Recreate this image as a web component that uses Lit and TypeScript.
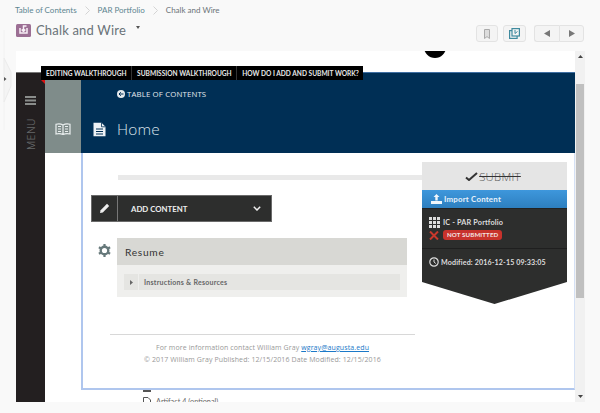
import { LitElement, html, css } from "lit";
import { customElement } from "lit/decorators.js";

@customElement("app-root")
export class AppRoot extends LitElement {
  static styles = css`
    :host { display: block; width: 600px; height: 413px; background: #f9f9f9; overflow: hidden; position: relative; font-family: Lato, "Open Sans", sans-serif; color: #444; }
    * { box-sizing: border-box; }
    .crumbs { display: flex; align-items: center; height: 20px; padding: 0 0 0 15px; font-size: 8px; color: #5d8590; gap: 8px; }
    .crumbs svg { display: block; }
    .crumbs .cur { color: #6b7378; }
    .head { display: flex; align-items: center; height: 31px; padding: 0 16px 11px 16px; }
    .title { font-size: 13px; color: #6a7378; margin-left: 5px; letter-spacing: 0.18px; }
    .caret { width: 0; height: 0; border: 2.5px solid transparent; border-top: 3px solid #555; margin: 0 0 0 10px; position: relative; top: -2px; }
    .tools { margin-left: auto; margin-top: 7px; display: flex; gap: 5px; }
    .btn { height: 17px; background: #f4f4f4; border: 1px solid #e3e3e3; border-radius: 3px; display: flex; align-items: center; justify-content: center; }
    .btn.b1 { width: 22px; } .btn.b2 { width: 23px; margin-right: 3px; }
    .group { display: flex; }
    .group .btn { width: 25px; }
    .group .btn:first-child { border-radius: 3px 0 0 3px; border-right: 0; }
    .group .btn:last-child { border-radius: 0 3px 3px 0; }
    .frame-row { display: flex; margin-left: 16px; width: 569px; height: 351px; }
    .frame { width: 559px; height: 351px; background: #fff; position: relative; overflow: hidden; }
    .scroll { width: 10px; background: #f1f1f1; display: flex; flex-direction: column; align-items: center; }
    .scroll .up, .scroll .dn { height: 33px; width: 100%; display: flex; justify-content: center; padding-top: 4px; }
    .scroll .dn { height: 17px; padding-top: 10px; margin-top: auto; }
    .scroll .thumb { width: 8px; height: 214px; background: #c0c0c0; }
    .dot { position: absolute; left: 408px; top: -15px; width: 22px; height: 22px; border-radius: 50%; background: #000; }
    .page { display: flex; position: absolute; left: 0; top: 21px; right: 0; bottom: 0; }
    .side { width: 29px; background: #231f20; border-top: 1px solid #777; display: flex; flex-direction: column; align-items: center; padding-top: 23px; }
    .menu { writing-mode: vertical-rl; transform: rotate(180deg); font-size: 10.2px; color: #66696a; margin-top: 13px; letter-spacing: 0.4px; font-family: Inter, sans-serif; font-weight: 300; }
    .mid { width: 36px; height: 81px; padding-top: 8px; }
    .mid > div { height: 73px; background: #7f8c8a; display: flex; align-items: center; justify-content: center; padding-top: 24px; }
    .tabs { position: absolute; left: 25px; top: 15px; height: 14px; background: #000; display: flex; font-size: 6.6px; font-weight: 700; color: #e8e8e8; z-index: 3; white-space: nowrap; }
    .tabs span { padding: 0 4.500px 0 5px; display: flex; align-items: center; border-right: 1px solid #333; }
    .tabs span:last-child { border: 0; }
    .tri { position: absolute; left: 25px; top: 29px; width: 0; height: 0; border-top: 4px solid #d11; border-left: 4px solid transparent; z-index: 2; }
    .panel { width: 494px; display: flex; flex-direction: column; }
    .navy { height: 81px; background: #002f55; border-top: 1px solid #3f6fa3; color: #e5eaee; padding: 16px 0 0 11px; }
    .toc { display: flex; align-items: center; gap: 2px; font-size: 7.8px; margin-left: 25px; letter-spacing: 0.15px; font-family: "Open Sans", sans-serif; }
    .hometitle { display: flex; align-items: center; margin-top: 20px; font-size: 15.4px; font-weight: 300; font-family: "Open Sans", sans-serif; color: #d9e2ea; gap: 10px; letter-spacing: 0.2px; }
    .body { width: 494px; height: 237px; background: #fff; border: solid #afc6ee; border-width: 0 1px 2px 2px; border-right-color: #d5e1f5; position: relative; padding: 22px 0 0 8px; }
    .bar { height: 5px; width: 305px; background: #e9e9e9; margin-left: 27px; }
    .add { display: flex; width: 181px; height: 27px; margin-top: 15px; background: #2d2e2d; border: 1px solid #6a6a6a; color: #eee; font-size: 7.8px; font-weight: 700; }
    .add .pen { width: 26px; display: flex; align-items: center; justify-content: center; border-right: 1px solid #777; }
    .add .lbl { flex: 1; display: flex; align-items: center; justify-content: space-between; padding: 0 10px 0 13px; }
    .res { display: flex; margin-top: 16px; }
    .gear { width: 26px; display: flex; justify-content: center; padding-top: 6px; }
    .card { width: 290px; }
    .card h3 { margin: 0; height: 27px; background: #d8d8d4; font: 400 10.2px Lato, sans-serif; letter-spacing: 0.7px; color: #333; display: flex; align-items: center; padding: 0 8px; }
    .card .in { height: 32px; background: #efefed; padding: 9px 7px; }
    .card .row { height: 16px; background: #e5e5e2; display: flex; align-items: center; font-size: 7px; font-weight: 700; letter-spacing: 0.26px; color: #666; }
    .card .row i { width: 15px; height: 100%; border-right: 1px solid #efefed; display: flex; align-items: center; justify-content: center; margin-right: 5px; }
    .foot { margin: 37px 0 0 19px; width: 305px; border-top: 1px solid #d8d8d8; padding-top: 7px; text-align: center; font-size: 7px; line-height: 11.500px; color: #999; letter-spacing: 0.1px; font-family: "Open Sans", sans-serif; }
    .foot a { color: #1b79c8; text-decoration: underline; }
    .sub { position: absolute; left: 339px; top: 9px; width: 145px; }
    .sub .top { height: 28px; background: #e5e5e5; display: flex; align-items: center; justify-content: center; font-size: 11.3px; font-weight: 300; color: #555; letter-spacing: 0.3px; font-family: "Open Sans", sans-serif; padding-right: 3px; }
    .sub .top span { text-decoration: line-through; text-decoration-color: #333; margin-left: 1px; }
    .imp { height: 19px; background: linear-gradient(#3e97dc, #2d7fbf); color: #e6f2fb; font: 700 7.900px Lato, sans-serif; letter-spacing: 0.2px; display: flex; align-items: center; gap: 2px; padding-left: 9px; border-bottom: 1px solid #222; }
    .dark { background: #2d2e2d; color: #ddd; font: 700 7.3px Lato, sans-serif; letter-spacing: 0.15px; }
    .d1 { height: 40px; padding: 8px 0 0 7px; border-bottom: 1px solid #1f1f1f; display: grid; grid-template-columns: 11px auto; column-gap: 3px; row-gap: 2px; align-items: center; justify-content: start; align-content: start; }
    .badge { background: #c8322c; color: #f3e3e3; font-size: 6.2px; border-radius: 3px; padding: 0 4px; height: 10px; line-height: 10px; letter-spacing: 0.1px; justify-self: start; }
    .d2 { height: 55px; padding: 8px 0 0 7px; display: flex; align-items: flex-start; gap: 2px; clip-path: polygon(0 0, 100% 0, 100% 60%, 50% 100%, 0 60%); font-size: 7.1px; }
    .d2 span { padding-top: 1px; }
    .bottom { height: 12px; overflow: hidden; }
    .stub { width: 8px; height: 2px; background: #555; margin-left: 62px; }
    .peek { display: flex; align-items: center; gap: 5px; font-size: 7.3px; color: #666; margin: 4px 0 0 62px; height: 10px; }
    .handle { position: absolute; left: 0; top: 30px; }
  `;

  render() {
    const chevron = html`<svg width="5" height="9" viewBox="0 0 5 9"><path d="M.5.5 4.500 4.500.5 8.500" fill="none" stroke="#d4d4d4"/></svg>`;
    return html`
      <div class="crumbs"><span>Table of Contents</span>${chevron}<span>PAR Portfolio</span>${chevron}<span class="cur">Chalk and Wire</span></div>
      <div class="head">
        <svg width="15" height="14" viewBox="0 0 15 14"><rect width="15" height="13" y="1" rx="1.5" fill="#9c6f94"/><path d="M4 5v5h7V5M7.5 8.5V3h3M7.5 8.5 5.7 6.6M7.5 8.5l1.8-1.900" stroke="#f7f0f6" stroke-width="1.5" fill="none"/></svg>
        <span class="title">Chalk and Wire</span><i class="caret"></i>
        <div class="tools">
          <div class="btn b1"><svg width="6" height="10" viewBox="0 0 6 10"><path d="M.5.5h5v9L3 7.6.5 9.500z" fill="#ddd" stroke="#aaa"/></svg></div>
          <div class="btn b2"><svg width="11" height="11" viewBox="0 0 11 11"><rect x=".6" y="2.600" width="7.500" height="7.800" fill="none" stroke="#3f8a9e" stroke-width="1.200"/><rect x="3" y=".6" width="7.400" height="7.400" fill="#f4f4f4" stroke="#3f8a9e" stroke-width="1.200"/><path d="M6 2v3.500L8.500 3.500" stroke="#3f8a9e" fill="none"/></svg></div>
          <div class="group">
            <div class="btn"><svg width="6" height="7"><path d="M6 0v7L0 3.500z" fill="#777"/></svg></div>
            <div class="btn"><svg width="6" height="7"><path d="M0 0v7l6-3.500z" fill="#777"/></svg></div>
          </div>
        </div>
      </div>
      <div class="frame-row">
        <div class="frame">
          <div class="dot"></div>
          <div class="tabs"><span>EDITING WALKTHROUGH</span><span>SUBMISSION WALKTHROUGH</span><span>HOW DO I ADD AND SUBMIT WORK?</span></div>
          <div class="tri"></div>
          <div class="page">
            <div class="side">
              <svg width="11" height="9" viewBox="0 0 11 9"><path d="M0 1h11M0 4.500h11M0 8h11" stroke="#8a8d8b" stroke-width="2"/></svg>
              <div class="menu">MENU</div>
            </div>
            <div class="mid"><div>
              <svg width="16" height="12" viewBox="0 0 16 12"><path d="M8 2C6 .8 3 .7 1 1.300V11c2-.6 5-.5 7 .5 2-1 5-1.100 7-.5V1.300C13 .7 10 .8 8 2zM8 2v9.500M3 3.500h3M3 6h3M3 8.500h3M10 3.500h3M10 6h3M10 8.500h3" fill="none" stroke="#e9eeee" stroke-width="1.200"/></svg>
            </div></div>
            <div class="panel">
              <div class="navy">
                <div class="toc"><svg width="8" height="8" viewBox="0 0 8 8"><circle cx="4" cy="4" r="4" fill="#e3e8ec"/><path d="M6.500 4H2M3.800 2.200 2 4l1.800 1.800" stroke="#002f55" fill="none"/></svg><span>TABLE OF CONTENTS</span></div>
                <div class="hometitle">
                  <svg width="15" height="15" viewBox="0 0 15 15"><path d="M1.500.8h8l4 4v9.400h-12z" fill="#eef2f5"/><path d="M4 7h7M4 9.500h7M4 12h7" stroke="#002f55"/><path d="M9.500.8v4h4" fill="none" stroke="#002f55" stroke-width=".8"/></svg>
                  <span>Home</span>
                </div>
              </div>
              <div class="body">
                <div class="bar"></div>
                <div class="add">
                  <div class="pen"><svg width="11" height="11" viewBox="0 0 11 11"><path d="M1 10l.6-2.800L8 .8l2.200 2.200L3.800 9.400z" fill="#eee"/></svg></div>
                  <div class="lbl"><span>ADD CONTENT</span><svg width="8" height="5" viewBox="0 0 8 5"><path d="M.8.8 4 4 7.200.8" stroke="#eee" stroke-width="1.500" fill="none"/></svg></div>
                </div>
                <div class="res">
                  <div class="gear"><svg width="13" height="13" viewBox="0 0 13 13"><circle cx="6.500" cy="6.500" r="3.800" fill="none" stroke="#66787a" stroke-width="2.400"/><path d="M6.500 0v13M.9 3.200l11.200 6.600M.9 9.800l11.200-6.600" stroke="#66787a" stroke-width="2.200" stroke-dasharray="2.200 8.600 2.200"/></svg></div>
                  <div class="card">
                    <h3>Resume</h3>
                    <div class="in"><div class="row"><i><svg width="3" height="5"><path d="M0 0v5l3-2.500z" fill="#666"/></svg></i><span>Instructions &amp; Resources</span></div></div>
                  </div>
                </div>
                <div class="foot">For more information contact William Gray <a>wgray@augusta.edu</a><br>© 2017 William Gray Published: 12/15/2016 Date Modified: 12/15/2016</div>
                <div class="sub">
                  <div class="top">
                    <svg width="13" height="9" viewBox="0 0 13 9"><path d="M1 5.500 4 8l8-7" stroke="#333" stroke-width="2" fill="none"/></svg>
                    <span>SUBMIT</span>
                  </div>
                  <div class="imp"><svg width="11" height="10" viewBox="0 0 11 10"><path d="M5.500 0 8.500 3H6.700v3.500H4.300V3H2.500zM0 7h11v3H0z" fill="#f0f6fb"/></svg><span>Import Content</span></div>
                  <div class="dark d1">
                    <svg width="11" height="11" viewBox="0 0 11 11"><path d="M0 0h3v3H0zM4 0h3v3H4zM8 0h3v3H8zM0 4h3v3H0zM4 4h3v3H4zM8 4h3v3H8zM0 8h3v3H0zM4 8h3v3H4zM8 8h3v3H8z" fill="#ddd"/></svg>
                    <span>IC - PAR Portfolio</span>
                    <svg width="10" height="9" viewBox="0 0 10 9"><path d="M1 .5l8 8M9 .5l-8 8" stroke="#c8382c" stroke-width="2"/></svg>
                    <span class="badge">NOT SUBMITTED</span>
                  </div>
                  <div class="dark d2">
                    <svg width="10" height="10" viewBox="0 0 10 10"><circle cx="5" cy="5" r="4.200" fill="none" stroke="#ddd" stroke-width="1.200"/><path d="M5 2.500V5l1.800 1.500" stroke="#ddd" fill="none"/></svg>
                    <span>Modified: 2016-12-15 09:33:05</span>
                  </div>
                </div>
              </div>
              <div class="bottom">
                <div class="stub"></div>
                <div class="peek"><svg width="8" height="8" viewBox="0 0 8 8"><path d="M.5.5h4.500l2.500 2.500v5h-7z" fill="none" stroke="#555"/></svg><span>Artifact 4 (optional)</span></div>
              </div>
            </div>
          </div>
        </div>
        <div class="scroll">
          <div class="up"><svg width="5" height="3"><path d="M2.500 0 5 3H0z" fill="#444"/></svg></div>
          <div class="thumb"></div>
          <div class="dn"><svg width="5" height="3"><path d="M2.500 3 5 0H0z" fill="#444"/></svg></div>
        </div>
      </div>
      <div class="handle"><svg width="12" height="100" viewBox="0 0 12 100"><path d="M4 0v28" stroke="#f2f2f2"/><path d="M4 72v28" stroke="#f2f2f2"/><path d="M4 28 11 42v14L4 72z" fill="#f4f4f4" stroke="#ebebeb"/><path d="M4 47v4l2.500-2z" fill="#555"/></svg></div>
    `;
  }
}
